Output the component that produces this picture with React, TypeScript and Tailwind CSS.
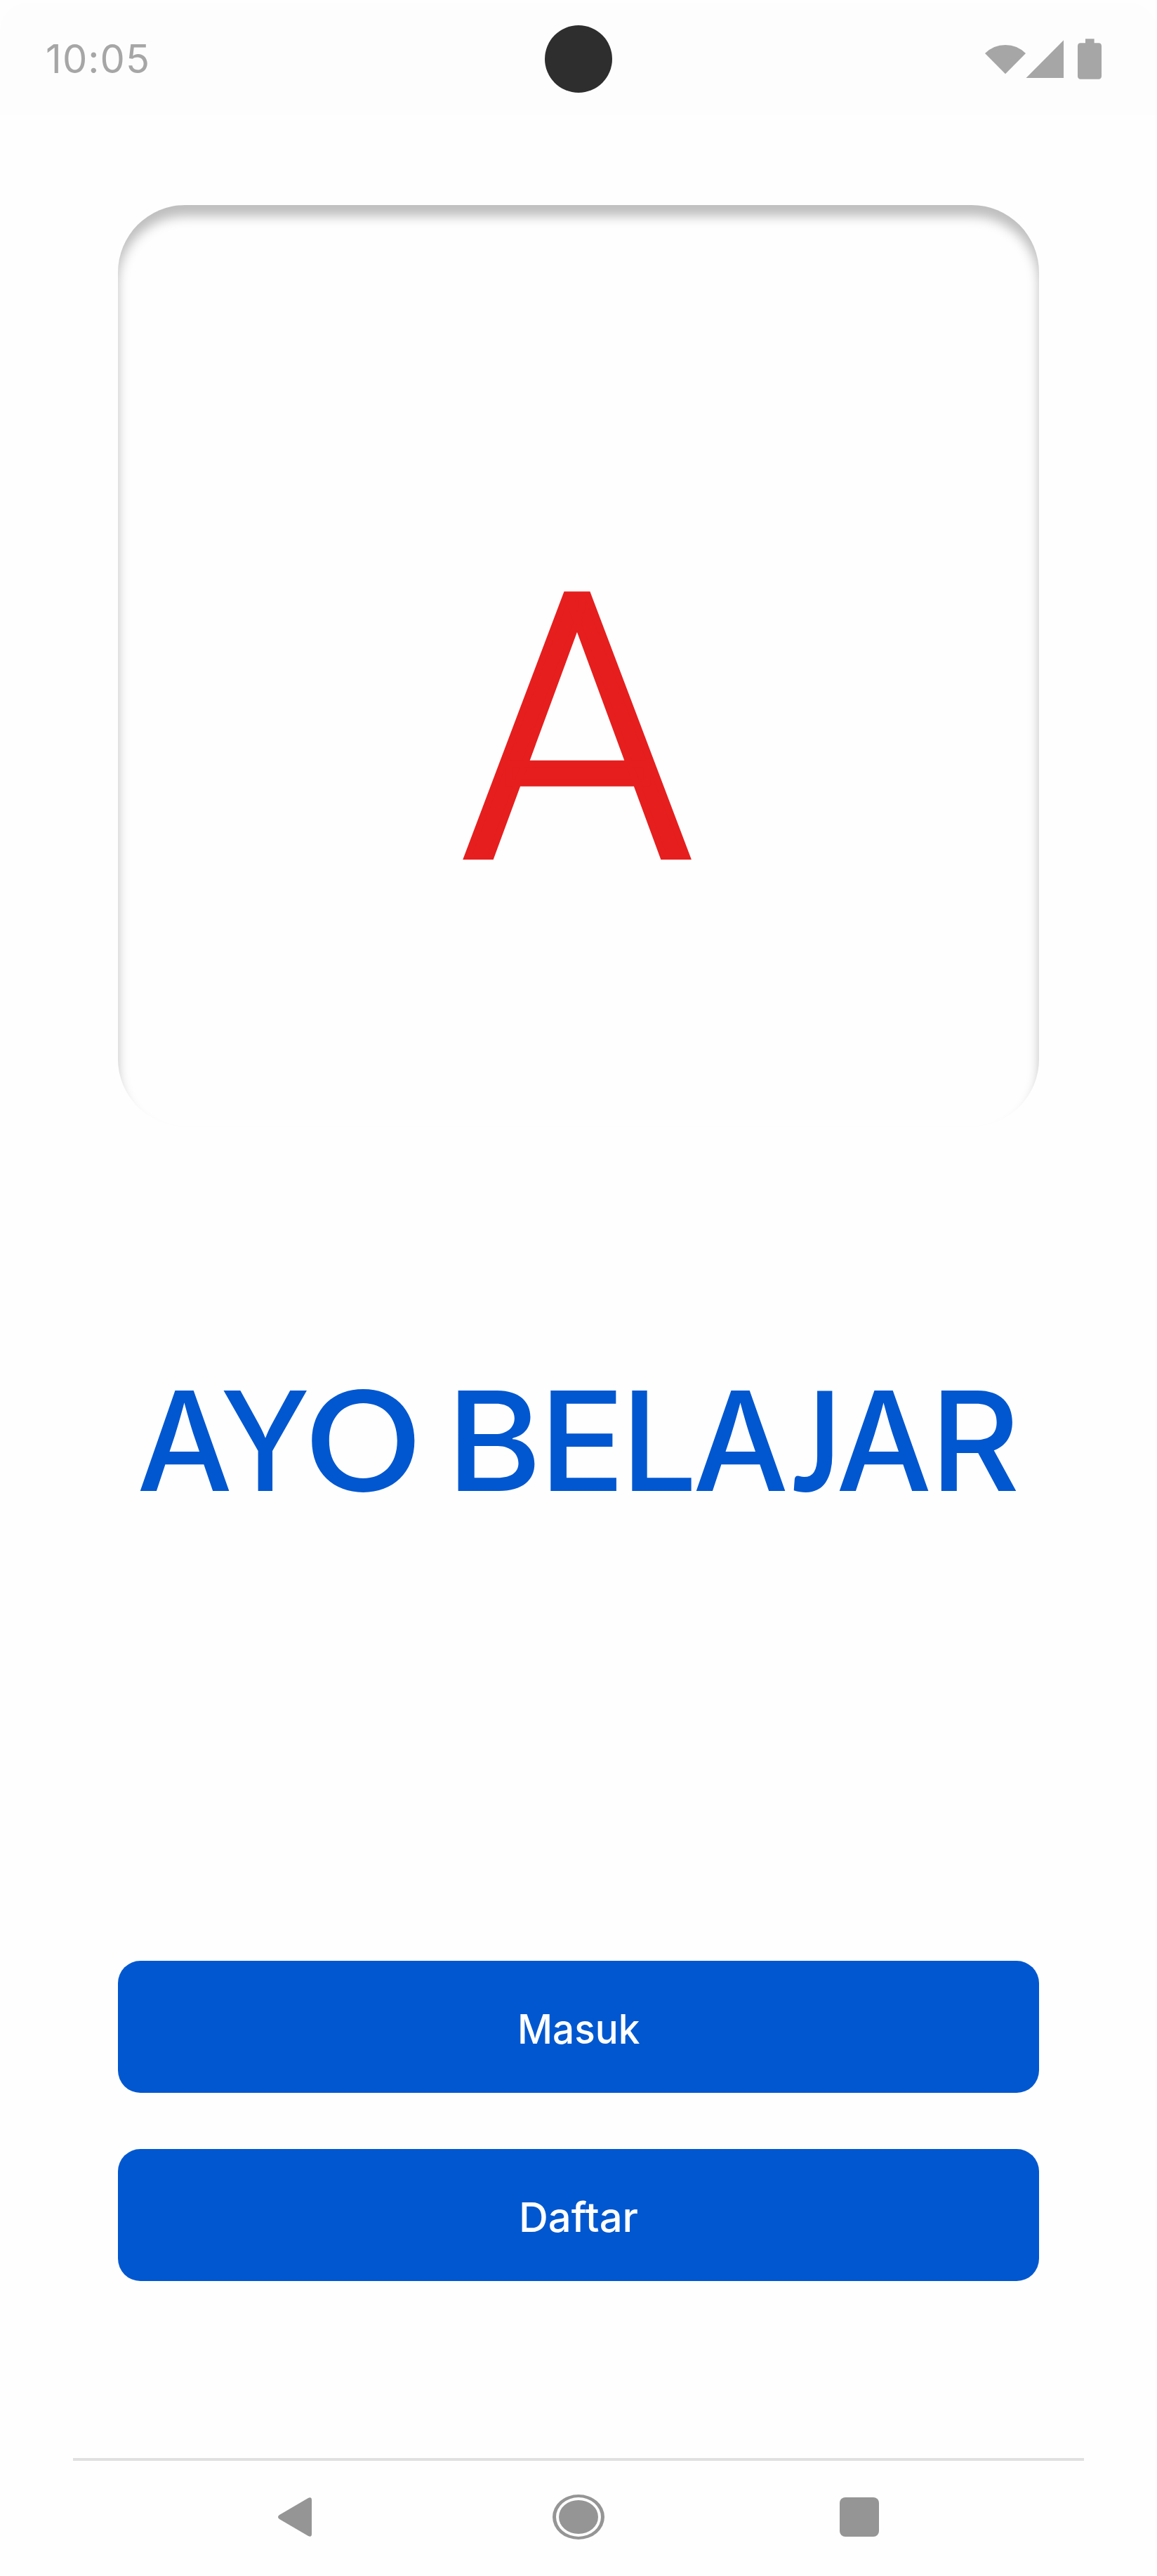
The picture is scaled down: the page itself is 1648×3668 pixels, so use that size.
function StatusBar() {
  return (
    <header className="mt-1 grid h-40 grid-cols-3 items-center rounded-t-[40px] bg-[#fdfdfd] text-[#a6a6a6]">
      <time className="pl-[65px] text-[56px] leading-none tracking-[1.1px]">10:05</time>
      <span className="size-24 justify-self-center rounded-full bg-[#2e2e2e]" />
      <svg className="mr-[76px] h-[62px] w-[172px] justify-self-end" viewBox="1400 53 172 62" fill="currentColor">
        <path d="M1403 76 Q1415 64 1432 64 T1461 76 L1432 105.3 Z" />
        <path d="M1461.5 111 L1515 57.3 V111 Z" />
        <path d="M1546 55.3 h12.6 v6 h6.2 a4.3 4.3 0 0 1 4.2 4.2 v43 a4.3 4.3 0 0 1 -4.2 4.2 h-25.6 a4.3 4.3 0 0 1 -4.2 -4.2 v-43 a4.3 4.3 0 0 1 4.2 -4.2 h6.8 Z" />
      </svg>
    </header>
  );
}

function Title() {
  return (
    <h1 className="mt-[343px] flex h-[200px] items-baseline pl-[195px] text-[197px] leading-[200px] font-medium text-[#0057d0] *:inline-block *:origin-left *:shrink-0 *:whitespace-pre">
      <span className="w-[119px] scale-x-[0.975]">A</span>
      <span className="w-[118px] scale-x-[0.93]">Y</span>
      <span className="w-[204px] scale-x-[1.13] font-[450]">O </span>
      <span className="w-[132px] scale-x-[1.05]">B</span>
      <span className="w-[117px] scale-x-[1.03]">E</span>
      <span className="w-[102px] scale-x-[0.97]">L</span>
      <span className="w-[142px] scale-x-[0.975]">A</span>
      <span className="w-[62px] scale-x-[0.8] font-['Lato'] text-[198px] font-bold">J</span>
      <span className="w-[134px] scale-x-[0.975]">A</span>
      <span>R</span>
    </h1>
  );
}

function Actions() {
  return (
    <div className="mt-[645px] flex flex-col gap-20 px-[168px] text-[58px] leading-none font-medium text-white">
      <button className="flex h-[188px] items-center justify-center rounded-[32px] bg-[#0057d0] pt-1.5">
        <span className="scale-x-[0.945]">Masuk</span>
      </button>
      <button className="flex h-[188px] items-center justify-center rounded-[32px] bg-[#0057d0] pt-1.5">
        <span>Daftar</span>
      </button>
    </div>
  );
}

function NavigationBar() {
  return (
    <footer className="mx-[104px] mt-[252px] flex h-[168px] items-center border-t-4 border-[#e0e0e0] pb-1 pl-[292px] text-[#959595]">
      <svg className="h-14 w-12" viewBox="0 0 48 56" fill="currentColor">
        <path d="M43 1 Q48 -1.5 48 4 V52 Q48 57.5 43 55 L2 31 Q-2 28 2 25 Z" />
      </svg>
      <svg className="ml-[343px] h-16 w-[74px]" viewBox="0 0 74 64">
        <path
          fill="currentColor"
          fillRule="evenodd"
          d="M0 32 a37 32 0 1 1 74 0 a37 32 0 1 1 -74 0 Z M5 32 a32 28 0 1 0 64 0 a32 28 0 1 0 -64 0 Z"
        />
        <ellipse cx="37" cy="32" rx="28" ry="24" fill="currentColor" />
      </svg>
      <span className="ml-[335px] size-14 rounded-lg bg-[#959595]" />
    </footer>
  );
}

export default function App() {
  return (
    <main className="flex h-[3668px] w-[1648px] flex-col overflow-hidden bg-[#fefefe] font-['Inter',sans-serif]">
      <StatusBar />
      <section className="mx-[168px] mt-32 flex h-[1312px] shrink-0 items-center justify-center rounded-[96px] pt-[185px] shadow-[inset_0_16px_16px_rgba(0,0,0,0.25)]">
        <span className="relative -left-0.5 font-['Roboto'] text-[523px] leading-none font-light text-[#e61e1e] [-webkit-text-stroke:10px_#e61e1e]">A</span>
      </section>
      <Title />
      <Actions />
      <NavigationBar />
    </main>
  );
}
